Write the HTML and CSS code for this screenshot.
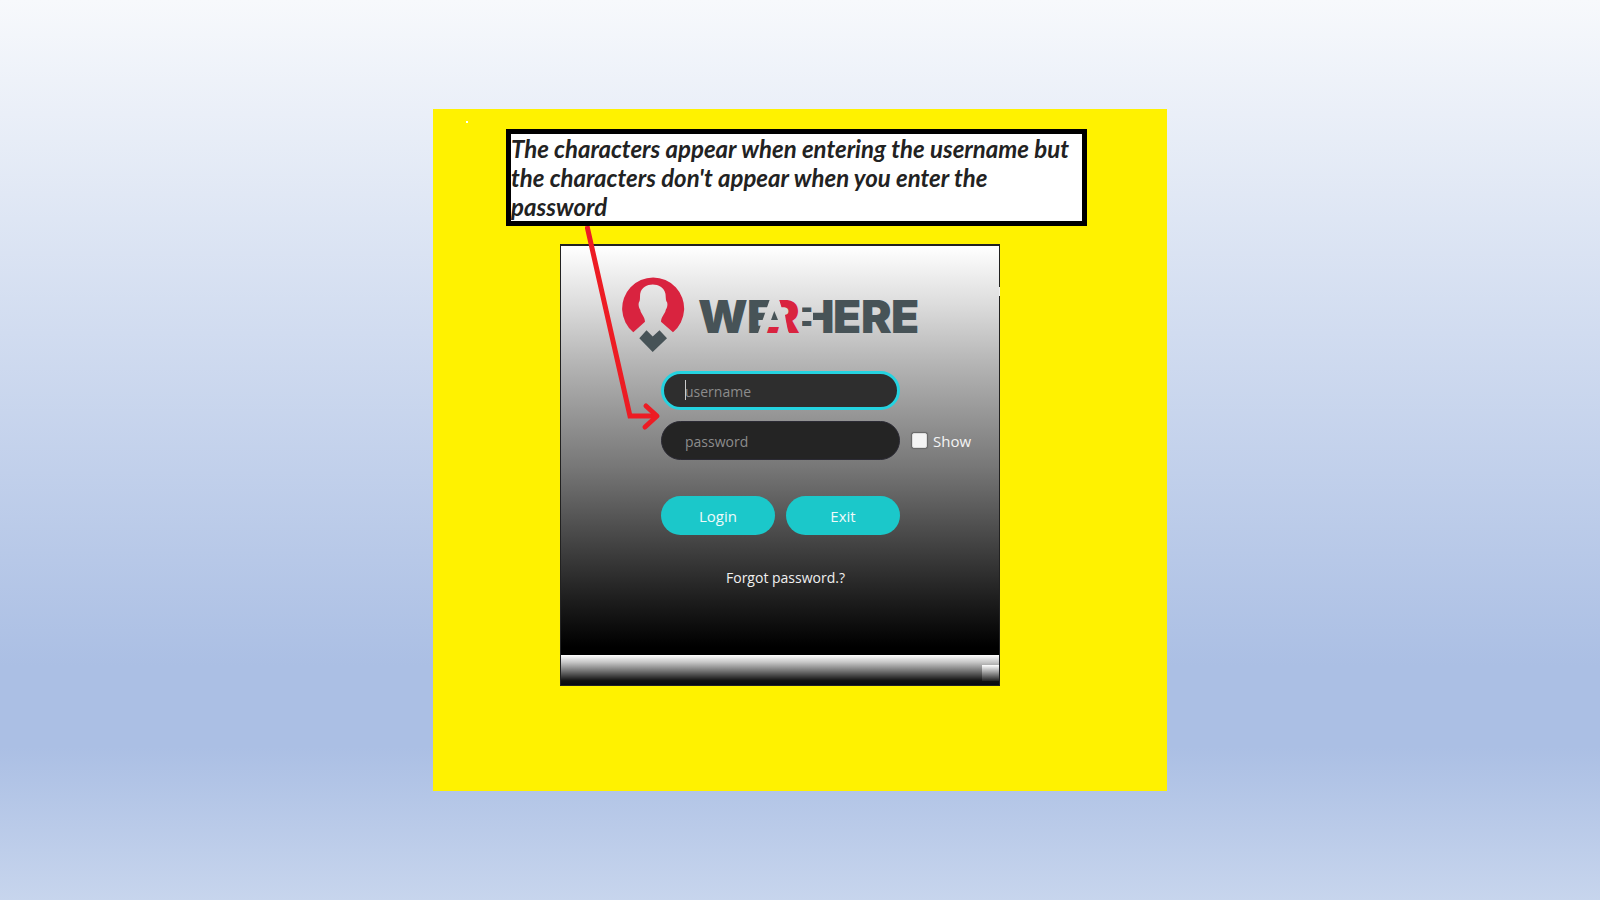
FILE: index.html
```html
<!DOCTYPE html>
<html lang="en">
<head>
<meta charset="utf-8">
<title>We Are Here - Login</title>
<link rel="stylesheet" href="styles.css">
</head>
<body>
<main class="board">
  <span class="speck"></span>
  <p class="note">The characters appear when entering the username but the characters don't appear when you enter the password</p>
  <section class="dialog">
    <div class="panel">
      <svg class="logo" viewBox="0 0 300 78" role="img" aria-label="We Are Here">
        <defs>
          <clipPath id="cut-e"><path d="M126 20H151L137 60H126Z"/></clipPath>
          <clipPath id="cut-a"><path d="M140 51H162V60H140Z"/></clipPath>
          <clipPath id="cut-r"><path d="M158 20H184V60H169L166 45L164 33H162Z"/></clipPath>
          <clipPath id="cut-h"><path d="M182 31.500H192V36H182ZM182 45H192V50H182ZM193 20H214V60H193Z"/></clipPath>
        </defs>
        <path class="pin" d="M13.300 56.300A31 31 0 1 1 53 56.300L41 45.700C41 41 45.500 37 45.700 34C47 32 48 29 47 26C45.500 25 46 20 45.300 17.300C43 5.500 22.500 5.500 20.300 17.300C19.700 20 20.500 25 19 26C18 29 19 32 20.300 34C20.500 37 25 41 25 45.700Z"/>
        <path class="slate" d="M19.300 62.300L26.500 54.300L32.700 60.500L39.500 54.300L47 62.300L32.700 76Z"/>
        <g class="wordmark">
          <text x="78" y="57">W</text>
          <text x="127" y="57" clip-path="url(#cut-e)">E</text>
          <path d="M154.300 35L151 44H158Z"/>
          <text class="red" x="146" y="57" clip-path="url(#cut-a)">A</text>
          <text class="red" x="149" y="57" clip-path="url(#cut-r)">R</text>
          <text x="180" y="57" clip-path="url(#cut-h)">H</text>
          <text x="213" y="57">E</text>
          <text x="241" y="57">R</text>
          <text x="271" y="57">E</text>
        </g>
      </svg>
      <form class="form">
        <div class="field">
          <input class="box box-active" type="text" placeholder="username" aria-label="username">
          <span class="caret"></span>
        </div>
        <div class="row">
          <input class="box" type="password" placeholder="password" aria-label="password">
          <label class="show"><input class="tick" type="checkbox">Show</label>
        </div>
        <div class="actions">
          <button class="btn" type="button">Login</button>
          <button class="btn" type="button">Exit</button>
        </div>
        <a class="forgot" href="#">Forgot password.?</a>
      </form>
    </div>
    <div class="strip"><span class="grip"></span></div>
  </section>
  <svg class="arrow" viewBox="0 0 80 212" aria-hidden="true">
    <path d="M2 0L45 190H71"/>
    <path class="head" d="M61 180L72 190L60 201"/>
  </svg>
</main>
</body>
</html>
```
FILE: styles.css
```css
* { box-sizing: border-box; }
body {
  margin: 0;
  min-height: 100vh;
  display: flex;
  align-items: center;
  justify-content: center;
  background: linear-gradient(#f7f9fc 0%, #abbfe4 74%, #abbfe4 83%, #c7d5ed 100%);
  font-family: "Open Sans", "Noto Sans", sans-serif;
  font-size: 15px;
}
.board {
  position: relative;
  width: 100%;
  max-width: 734px;
  padding: 20px 78px 105px 73px;
  background: #fff200;
}
.speck {
  position: absolute;
  left: 33px;
  top: 12px;
  width: 2px;
  height: 2px;
  background: #fff;
}
.note {
  margin: 0 0 18px;
  max-width: 581px;
  border: 5px solid #000;
  background: #fff;
  color: #222;
  font: italic 700 24px/29px Lato, "Open Sans", sans-serif;
}
.dialog {
  position: relative;
  max-width: 440px;
  margin-left: 54px;
  border: 1px solid #222;
  border-top-width: 2px;
}
.dialog::after {
  content: "";
  position: absolute;
  right: -1px;
  top: 41px;
  width: 1px;
  height: 9px;
  background: #eee;
}
.panel {
  display: flex;
  flex-direction: column;
  padding: 30px 0 67px;
  background: linear-gradient(#fff 0%, #ddd 14%, #b4b4b4 29%, #777 54%, #1c1c1c 87%, #000 98%);
}
.logo {
  width: 300px;
  height: 78px;
  margin-left: 59px;
}
.pin, .red { fill: #d9233f; }
.slate { fill: #475357; }
.wordmark {
  fill: #475357;
  font: 900 46px Inter, sans-serif;
}
.form {
  display: flex;
  flex-direction: column;
  margin: 17px 0 0 100px;
}
.field { position: relative; }
.box {
  width: 239px;
  height: 39px;
  padding: 1px 23px 0;
  border: 1px solid #2b2a34;
  border-radius: 20px;
  outline: 0;
  background: #242424;
  color: #ddd;
  font: inherit;
  font-size: 14px;
}
.box::placeholder { color: #8c8c8c; opacity: 1; }
.box-active {
  padding: 1px 21px 0;
  border: 3px solid #25d3e0;
  background: #2e2e2e;
}
.field .box { display: block; }
.caret {
  position: absolute;
  left: 24px;
  top: 9px;
  width: 1px;
  height: 20px;
  background: #ccc;
}
.row {
  display: flex;
  align-items: center;
  gap: 12px;
  margin-top: 11px;
}
.show {
  display: flex;
  align-items: center;
  gap: 6px;
  color: #f4f4f4;
}
.tick {
  appearance: none;
  width: 15px;
  height: 15px;
  margin: 0;
  border: 1px solid #ddd;
  border-radius: 2px;
  background: #f4f4f4;
  box-shadow: 0 0 1px 1px #666;
}
.actions {
  display: flex;
  gap: 11px;
  width: 239px;
  margin-top: 36px;
}
.btn {
  flex: 1;
  height: 39px;
  padding: 1px 0 0;
  border: 0;
  border-radius: 20px;
  background: #1bc8ca;
  color: #effafa;
  font: inherit;
}
.forgot {
  align-self: flex-start;
  margin: 33px 0 0 65px;
  color: #f0f0f0;
  font-size: 14px;
  line-height: 20px;
  text-decoration: none;
}
.strip {
  display: flex;
  justify-content: flex-end;
  padding: 10px 0 4px;
  background: linear-gradient(#fff 0%, #c4c4c4 25%, #777 52%, #111 86%, #080a10 100%);
}
.grip {
  width: 17px;
  height: 16px;
  background: linear-gradient(#fff, #aaa 40%, #222);
}
.arrow {
  position: absolute;
  left: 152px;
  top: 117px;
  width: 80px;
  height: 212px;
  fill: none;
  stroke: #ed1c24;
  stroke-width: 5;
}
.head { stroke-linecap: round; stroke-linejoin: round; }
```
